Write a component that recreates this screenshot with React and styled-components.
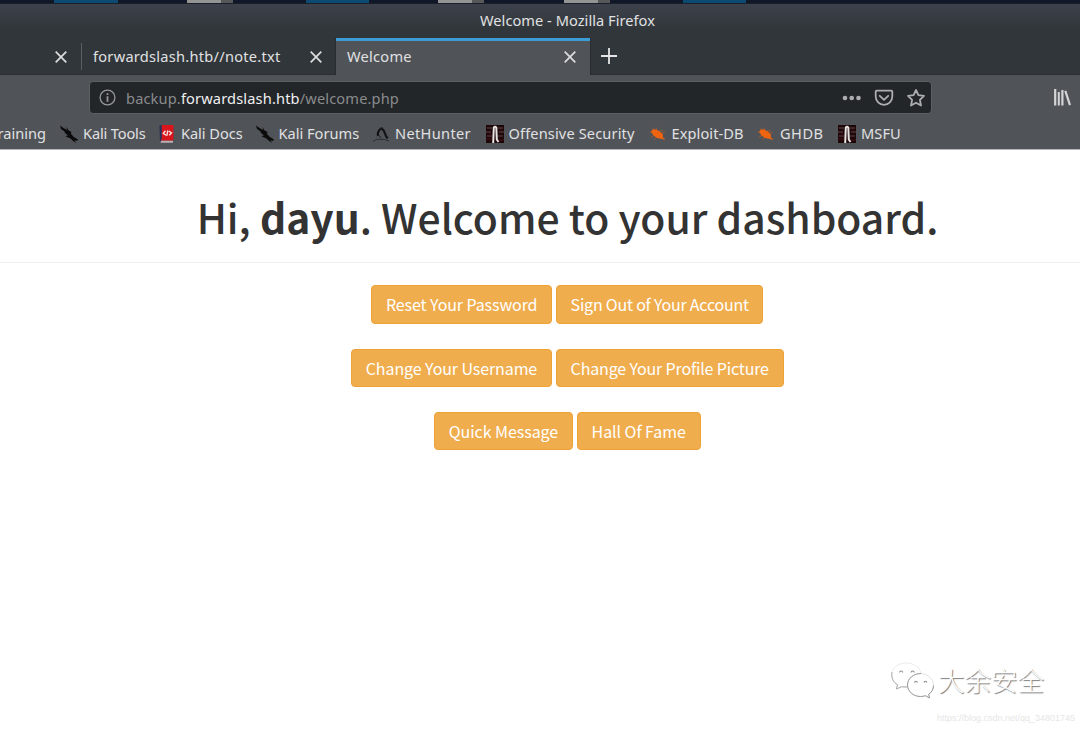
import React from "react";
import styled, { createGlobalStyle } from "styled-components";

const Global = createGlobalStyle`
  * { box-sizing: border-box; }
  body { margin: 0; background: #fff; overflow: hidden; }
  svg { display: block; flex: none; }
`;

const Screen = styled.div`
  position: relative;
  width: 1080px;
  height: 729px;
  overflow: hidden;
  font-family: "Noto Sans", sans-serif;
  font-size: 14.6px;
  color: #e0e1e2;
  white-space: nowrap;
`;

const Panel = styled.div`
  display: flex;
  height: 4px;
  background: #0f1728;
  border-bottom: 1px solid #1b2028;
`;
const Segment = styled.div`
  flex: none;
  width: ${(p) => p.$w}px;
  background: ${(p) => p.$c};
`;

const Chrome = styled.header`
  height: 71px;
  background: linear-gradient(#3d414b 0, #31363a 26px, #31363a 100%);
  border-bottom: 1px solid #2a2d31;
`;
const TitleBar = styled.div`
  height: 34px;
  padding: 0 0 0 480px;
  line-height: 33px;
  letter-spacing: 0.04px;
`;
const TabStrip = styled.div`
  display: flex;
  height: 37px;
`;
const Tab = styled.div`
  display: flex;
  align-items: center;
  flex: none;
  width: ${(p) => p.$w}px;
  height: 36px;
  padding: 0 14px 2px 11px;
  letter-spacing: 0.26px;
  border-top: 3px solid transparent;
`;
const ActiveTab = styled(Tab)`
  height: 37px;
  padding-bottom: 3px;
  background: #505358;
  border-top-color: #3c9cd6;
  box-shadow: -1px 0 #292c30, 1px 0 #292c30;
`;
const Divider = styled.div`
  width: 1px;
  height: 27px;
  margin: 5px 0 0;
  background: #5b5f64;
`;
const Label = styled.span`
  flex: 1;
  padding-bottom: 2px;
`;
const NewTab = styled.div`
  padding: 10px 0 0 11px;
`;

const NavBar = styled.div`
  display: flex;
  align-items: center;
  height: 44px;
  padding: 0 9px 0 89px;
  background: #505358;
`;
const UrlBar = styled.div`
  display: flex;
  align-items: center;
  width: 843px;
  height: 33px;
  padding: 0 5px 0 9px;
  background: #232629;
  border: 1px solid #5c6065;
  border-radius: 4px;
`;
const Url = styled.div`
  flex: 1;
  padding: 2px 0 0 10px;
  color: #898b8d;
  line-height: 31px;
  letter-spacing: 0.15px;
  b { font-weight: 400; color: #eff0f1; }
`;
const UrlActions = styled.div`
  display: flex;
  align-items: center;
  gap: 12px;
  padding-top: 1px;
`;
const Library = styled.div`
  margin-left: auto;
  padding-top: 1px;
`;

const BookmarkBar = styled.div`
  display: flex;
  height: 31px;
  background: #505358;
  border-bottom: 1px solid #b4b5b7;
  line-height: 28px;
`;
const Bookmark = styled.div`
  display: flex;
  align-items: center;
  gap: 5px;
  flex: none;
  width: ${(p) => p.$w}px;
  height: 29px;
  letter-spacing: ${(p) => p.$ls}px;
  span { padding-bottom: 1px; }
`;
const CutBookmark = styled.div`
  display: flex;
  justify-content: flex-end;
  flex: none;
  width: 60px;
  padding-right: 14px;
`;

const Page = styled.main`
  padding-top: 42px;
  font-family: "Noto Sans CJK SC", sans-serif;
  text-align: center;
`;
const Heading = styled.h1`
  height: 71px;
  margin: 0;
  padding-left: 55px;
  line-height: 50px;
  font-size: 40.8px;
  font-weight: 500;
  color: #333;
  border-bottom: 1px solid #eee;
  b { font-weight: 700; }
`;
const Actions = styled.div`
  display: flex;
  flex-direction: column;
  gap: 25px;
  padding: 22.3px 0 0 54.4px;
`;
const ActionRow = styled.div`
  display: flex;
  justify-content: center;
  gap: 3.5px;
`;
const Button = styled.button`
  width: ${(p) => p.$w}px;
  height: 38.4px;
  padding: 0;
  background: #f0ad4e;
  border: 1px solid #eea236;
  border-radius: 4px;
  color: #fff;
  font: 400 16px/36px "Noto Sans CJK SC", sans-serif;
  letter-spacing: ${(p) => p.$ls}px;
  white-space: nowrap;
`;

const Watermark = styled.div`
  position: absolute;
  left: 890px;
  top: 659px;
  display: flex;
  align-items: center;
  gap: 3px;
  font: 300 26.5px/42px "Noto Sans CJK SC", sans-serif;
  color: #fff;
  text-shadow: 1px 1px 1px #777;
`;
const SourceUrl = styled.div`
  position: absolute;
  right: 5px;
  bottom: 4px;
  font: 9px/13px "Liberation Sans", sans-serif;
  color: #e6e6e6;
`;

const Close = () => (
  <svg width="12" height="12" viewBox="0 0 12 12" stroke="#dcddde" strokeWidth="1.7" fill="none">
    <path d="M.7.7 11.3 11.3M11.3.7.7 11.3" />
  </svg>
);
const Plus = () => (
  <svg width="16" height="16" viewBox="0 0 16 16" stroke="#e6e6e6" strokeWidth="1.8">
    <path d="M8 0V16M0 8H16" />
  </svg>
);
const Info = () => (
  <svg width="17" height="17" viewBox="0 0 17 17" fill="none" stroke="#96989a">
    <circle cx="8.5" cy="8.5" r="7.4" strokeWidth="1.3" />
    <path d="M8.5 7.3V12.8M8.5 4.2V6" strokeWidth="1.8" />
  </svg>
);
const Dots = () => (
  <svg width="20" height="6" viewBox="0 0 20 6" fill="#abadae">
    <circle cx="3" cy="3" r="2.3" />
    <circle cx="9.7" cy="3" r="2.3" />
    <circle cx="16.5" cy="3" r="2.3" />
  </svg>
);
const Pocket = () => (
  <svg width="20" height="18" viewBox="0 0 20 18" fill="none" stroke="#abadae" strokeWidth="1.8" strokeLinecap="round" strokeLinejoin="round">
    <path d="M2.6 1.6H17.4Q18.3 1.6 18.3 2.5V7.5A8.3 8.3 0 0 1 1.7 7.5V2.5Q1.7 1.6 2.6 1.6Z" />
    <path d="M5.8 6.8 10 10.8 14.2 6.8" />
  </svg>
);
const Star = () => (
  <svg width="20" height="20" viewBox="0 0 20 20" fill="none" stroke="#abadae" strokeWidth="1.8" strokeLinejoin="round">
    <path d="M10 2 12.4 7.2 18 7.9 13.9 11.8 15 17.5 10 14.7 5 17.5 6.1 11.8 2 7.9 7.6 7.2Z" />
  </svg>
);
const Books = () => (
  <svg width="18" height="17" viewBox="0 0 18 17" stroke="#d4d5d6" fill="none">
    <path strokeWidth="2.2" d="M2.2 0V16.5M9.400 1V16.5M12.3 1.8 17 16.2" />
    <path strokeWidth="2" d="M5.8 3V16.5" />
  </svg>
);
const Kali = () => (
  <svg width="18" height="18" viewBox="0 0 18 18">
    <path fill="#0b0b0b" d="M0 .5 3.5 3 7 5 6.5 1.8 8.3 5.2 11.5 7 10.8 8.5 13.5 11.8 18 14.5 17 16 14.5 15.2 16 18 12.5 15.5 10.5 13.5 5.5 11.2 8 10.3 5.5 8.5 4 6 1 4Z" />
  </svg>
);
const Docs = () => (
  <svg width="18" height="18" viewBox="0 0 18 18" fill="none">
    <path fill="#d8151c" d="M3.5 0H15.5V14H3.5Z" />
    <path fill="#263158" d="M1.5 .5 3.7 0V15.5L2 17Z" />
    <path fill="#b8b1b4" d="M3 15.4H15V17.8H2.5Z" />
    <path fill="#d8151c" d="M3.5 14H15.5L15 15.5H3Z" />
    <path stroke="#f6dcdc" strokeWidth="1.4" d="M7.5 5.8 5.3 8.3 8 10.2M9.8 5.5 8.8 10.8M10.8 6 13.5 7.8 11.3 10.2" />
  </svg>
);
const NetHunter = () => (
  <svg width="18" height="18" viewBox="0 0 18 18" fill="none">
    <path stroke="#121416" strokeWidth="2.2" d="M6 11C5.2 6.5 8 2.8 10.5 4.2 13.5 5.8 12.2 10.5 15.8 13.4" />
    <path stroke="#2d3033" strokeWidth="1" d="M1 16.5Q5 13 8 14.4 12 13.5 17 16M6 5 8 3 11 2.5" />
    <path stroke="#1a1d20" d="M7 10.5 9 13" />
  </svg>
);
const Offensive = () => (
  <svg width="18" height="18" viewBox="0 0 18 18" fill="none">
    <path fill="#1d0709" d="M0 0H18V18H0Z" />
    <path stroke="#60494b" d="M1 3H6M0 7H5M1 11H6M12 3H17M13 7H18M12 11H17" />
    <path stroke="#4b1114" d="M0 14H6M12 15H18M4 8V11M15 4V6" />
    <path stroke="#e7e5e4" strokeWidth="2" d="M7.2 18 7.8 2.5Q9 .8 10.3 2.5L10.8 14.5 12.5 17" />
  </svg>
);
const Bug = () => (
  <svg width="18" height="18" viewBox="0 0 18 18" fill="none">
    <path stroke="#a65b31" strokeWidth=".8" d="M.5 7 4 8 4 3M8 5 7 2.5M10 6 14 5.5M13 8 16 7M2 12 6 10M5 14.5 8 12M13 12 16 14" />
    <path fill="#ee6410" d="M2 6.5Q3.5 3.8 7 4.5L11 6.5 14 9.5 13.8 12.5 16 15 12 13.8 8 13 4.5 10.5Z" />
  </svg>
);
const WeChat = () => (
  <svg width="45" height="39" viewBox="0 0 45 39" fill="none">
    <path fill="#fff" stroke="#e2e2e2" strokeWidth=".7" d="M16 2C7.5 2 1.5 7.3 1.5 14 1.5 18 3.8 21.5 7.5 23.7L6.5 28 11.5 25.5Q15 26.7 18.5 25.6L31 12.2C29.5 6 23.5 2 16 2Z" />
    <path stroke="#aaa" strokeWidth="1" d="M2 11C1 17 3.5 21.5 7.5 23.7L6.5 28 11.5 25.8 17 26" />
    <path fill="#fff" stroke="#d4d4d4" strokeWidth=".7" d="M30.5 12.5C23.5 12.5 17.5 17.5 17.5 24 17.5 30.5 23.5 35.5 30.5 35.5Q33 35.5 35.5 34.7L39.5 37 38.7 33.2C42 31 43.5 28 43.5 24.5 43.5 18 37.5 12.5 30.5 12.5Z" />
    <path stroke="#9c9c9c" strokeWidth="1" d="M31 12.5C23.5 12.5 17.5 17.5 17.5 24 17.5 30.5 23.5 35.5 30.5 35.5Q33 35.5 35.5 34.7L39.5 37 38.7 33.2C42 31 43.5 28 43.5 24.5" />
    <path stroke="#888" strokeWidth="1.1" d="M9.5 11.5A1.7 1.9 0 0 1 12.8 11.5M21 11.5A1.7 1.9 0 0 1 24.3 11.5M24.5 21.5A1.5 1.7 0 0 1 27.4 21.5M34 21.5A1.5 1.7 0 0 1 36.9 21.5" />
  </svg>
);

const panelSegments = [
  [54, "transparent"], [64, "#0d4a72"], [69, "transparent"], [34, "#949494"], [12, "#57585a"],
  [73, "transparent"], [63, "#0d4a72"], [69, "transparent"], [34, "#949494"], [12, "#57585a"],
  [80, "transparent"], [34, "#949494"], [12, "#57585a"], [73, "transparent"], [63, "#0d4a72"],
];
const bookmarks = [
  ["Kali Tools", Kali, 98, -0.15],
  ["Kali Docs", Docs, 97.5, -0.05],
  ["Kali Forums", Kali, 116.5, 0],
  ["NetHunter", NetHunter, 113.5, 0.33],
  ["Offensive Security", Offensive, 163, 0.13],
  ["Exploit-DB", Bug, 108.5, 0.08],
  ["GHDB", Bug, 81, 0.5],
  ["MSFU", Offensive, 70, 0.1],
];
const actionRows = [
  [["Reset Your Password", 181.5, -0.1], ["Sign Out of Your Account", 207.5, -0.22]],
  [["Change Your Username", 201.5, -0.1], ["Change Your Profile Picture", 228, -0.16]],
  [["Quick Message", 139.5, -0.05], ["Hall Of Fame", 124, -0.05]],
];

export default function App() {
  return (
    <Screen>
      <Global />
      <Panel>
        {panelSegments.map(([w, c], i) => <Segment key={i} $w={w} $c={c} />)}
      </Panel>
      <Chrome>
        <TitleBar>Welcome - Mozilla Firefox</TitleBar>
        <TabStrip>
          <Tab $w={81}><Label /><Close /></Tab>
          <Divider />
          <Tab $w={254}><Label>forwardslash.htb//note.txt</Label><Close /></Tab>
          <ActiveTab $w={254}><Label>Welcome</Label><Close /></ActiveTab>
          <NewTab><Plus /></NewTab>
        </TabStrip>
      </Chrome>
      <NavBar>
        <UrlBar>
          <Info />
          <Url>backup.<b>forwardslash.htb</b>/welcome.php</Url>
          <UrlActions><Dots /><Pocket /><Star /></UrlActions>
        </UrlBar>
        <Library><Books /></Library>
      </NavBar>
      <BookmarkBar>
        <CutBookmark>raining</CutBookmark>
        {bookmarks.map(([name, Icon, w, ls]) => (
          <Bookmark key={name} $w={w} $ls={ls}><Icon /><span>{name}</span></Bookmark>
        ))}
      </BookmarkBar>
      <Page>
        <Heading>Hi, <b>dayu</b>. Welcome to your dashboard.</Heading>
        <Actions>
          {actionRows.map((row, i) => (
            <ActionRow key={i}>
              {row.map(([text, w, ls]) => <Button key={text} $w={w} $ls={ls}>{text}</Button>)}
            </ActionRow>
          ))}
        </Actions>
      </Page>
      <Watermark><WeChat /><span>大余安全</span></Watermark>
      <SourceUrl>https://blog.csdn.net/qq_34801745</SourceUrl>
    </Screen>
  );
}
